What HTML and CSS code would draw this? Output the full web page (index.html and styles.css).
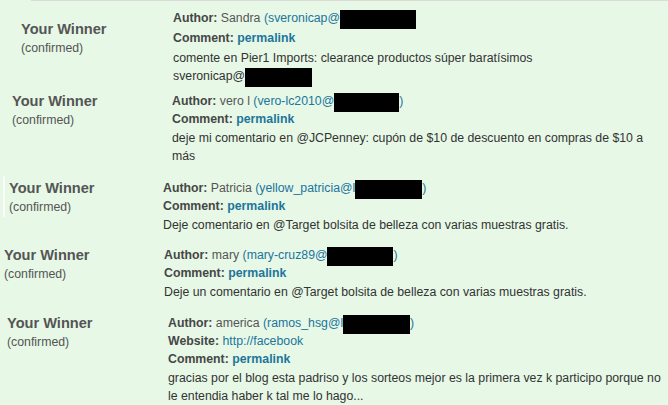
FILE: index.html
```html
<!DOCTYPE html>
<html lang="en">
<head>
    <meta charset="UTF-8">
    <meta name="viewport" content="width=device-width, initial-scale=1.0">
    <title>Giveaway winners</title>
    <link rel="stylesheet" href="styles.css">
</head>
<body>

    <div class="top-rule"></div>

    <div class="entries">

        <div class="entry entry-1">
            <div class="winner">
                <h3>Your Winner</h3>
                <span>(confirmed)</span>
            </div>
            <div class="details">
                <div class="meta"><b>Author:</b> Sandra <a href="#">(sveronicap@<span class="hidden w76"></span></a></div>
                <div class="meta"><b>Comment:</b> <a href="#" class="permalink">permalink</a></div>
                <p class="text">comente en Pier1 Imports: clearance productos súper baratísimos <span class="nowrap">sveronicap@<span class="hidden w67"></span></span></p>
            </div>
        </div>

        <div class="entry entry-2">
            <div class="winner">
                <h3>Your Winner</h3>
                <span>(confirmed)</span>
            </div>
            <div class="details">
                <div class="meta"><b>Author:</b> vero l <a href="#">(vero-lc2010@<span class="hidden w65"></span>)</a></div>
                <div class="meta"><b>Comment:</b> <a href="#" class="permalink">permalink</a></div>
                <p class="text">deje mi comentario en @JCPenney: cupón de $10 de descuento en compras de $10 a más</p>
            </div>
        </div>

        <div class="entry entry-3">
            <div class="winner">
                <h3>Your Winner</h3>
                <span>(confirmed)</span>
            </div>
            <div class="details">
                <div class="meta"><b>Author:</b> Patricia <a href="#">(yellow_patricia@l<span class="hidden w67"></span>)</a></div>
                <div class="meta"><b>Comment:</b> <a href="#" class="permalink">permalink</a></div>
                <p class="text">Deje comentario en @Target bolsita de belleza con varias muestras gratis.</p>
            </div>
        </div>

        <div class="entry entry-4">
            <div class="winner">
                <h3>Your Winner</h3>
                <span>(confirmed)</span>
            </div>
            <div class="details">
                <div class="meta"><b>Author:</b> mary <a href="#">(mary-cruz89@<span class="hidden w66"></span>)</a></div>
                <div class="meta"><b>Comment:</b> <a href="#" class="permalink">permalink</a></div>
                <p class="text">Deje un comentario en @Target bolsita de belleza con varias muestras gratis.</p>
            </div>
        </div>

        <div class="entry entry-5">
            <div class="winner">
                <h3>Your Winner</h3>
                <span>(confirmed)</span>
            </div>
            <div class="details">
                <div class="meta"><b>Author:</b> america <a href="#">(ramos_hsg@l<span class="hidden w67"></span>)</a></div>
                <div class="meta"><b>Website:</b> <a href="#">http://facebook</a></div>
                <div class="meta"><b>Comment:</b> <a href="#" class="permalink">permalink</a></div>
                <p class="text">gracias por el blog esta padriso y los sorteos mejor es la primera vez k participo porque no le entendia haber k tal me lo hago...</p>
            </div>
        </div>

    </div>

</body>
</html>
```

FILE: styles.css
```css
body {
    font-family: "Liberation Sans", Arial, sans-serif;
    font-size: 12.3px;
    background-color: #e7f8e7;
    color: #333;
    margin: 0;
    padding: 0;
    overflow: hidden;
}
a {
    color: #21759b;
    text-decoration: none;
}
.top-rule {
    height: 1px;
    margin-left: 31px;
    background-color: #d9dcd9;
}
.entries {
    display: flex;
    flex-direction: column;
    gap: 13px;
    padding-top: 7px;
}
.entry {
    display: flex;
}
.winner {
    width: 160px;
    flex: none;
    box-sizing: border-box;
    color: #555;
}
.winner h3 {
    margin: 0;
    font-size: 14.6px;
    line-height: 18px;
    font-weight: bold;
}
.winner span {
    display: block;
    line-height: 20px;
}
.details {
    width: 496px;
    flex: none;
}
.meta {
    line-height: 18px;
    color: #555;
}
.meta b {
    color: #464646;
}
.permalink {
    font-weight: bold;
}
.text {
    margin: 1px 0 0;
    line-height: 18px;
}
.nowrap {
    white-space: nowrap;
}
.hidden {
    display: inline-block;
    height: 19px;
    margin: -4px 0;
    vertical-align: -3px;
    background-color: #000;
}
.w76 { width: 76px; }
.w67 { width: 67px; }
.w66 { width: 66px; }
.w65 { width: 65px; }

/* each winner block was clipped at a slightly different offset */
.entry-1 {
    padding-left: 21px;
}
.entry-1 .winner {
    width: 152px;
    margin-top: 12px;
}
.entry-1 .meta {
    line-height: 20px;
}
.entry-2 {
    padding-left: 12px;
    margin-top: -6px;
}
.entry-3 {
    padding-left: 3px;
    margin-top: 1px;
}
.entry-3 .winner {
    border-left: 2px solid #fbfdfb;
    padding-left: 4px;
    margin-top: -3px;
    padding-top: 3px;
    align-self: flex-start;
}
.entry-4 {
    padding-left: 4px;
    margin-top: -1px;
}
.entry-5 {
    padding-left: 7px;
    margin-top: 0;
}
.entry-5 .winner {
    width: 161px;
}
```
